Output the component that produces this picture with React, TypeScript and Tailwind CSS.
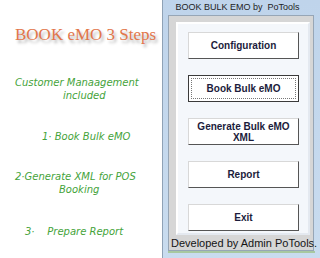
const green = 'text-[#44a33a] italic text-[10px] leading-[13px] whitespace-nowrap';
const greenFont = { fontFamily: '"DejaVu Sans", sans-serif' };

function WinButton({ label, focused = false }: { label: string; focused?: boolean }) {
  return (
    <div
      className={
        'h-[27px] w-[111px] bg-white flex items-center justify-center text-center ' +
        (focused
          ? 'border border-[#3a3a3a] p-[2px]'
          : 'border border-t-[#d8d8d8] border-l-[#d8d8d8] border-b-[#555] border-r-[#555]')
      }
    >
      <div
        className={
          'w-full h-full flex items-center justify-center ' +
          (focused ? 'border border-dotted border-[#777]' : '')
        }
      >
        <span className="text-[10px] leading-[11px] font-bold text-[#1c1c3c] font-['Liberation_Sans',sans-serif]">
          {label.split('\n').map((l, i) => (
            <span key={i} className="block">{l}</span>
          ))}
        </span>
      </div>
    </div>
  );
}

export default function App() {
  return (
    <div className="w-[320px] h-[258px] bg-white flex overflow-hidden">
      {/* left notes */}
      <div className="w-[162px] flex flex-col" style={greenFont}>
        <div
          className="mt-[26px] pl-[15px] text-[17px] leading-[18px] text-[#e2764b] whitespace-nowrap font-['Liberation_Serif',serif]"
          style={{ textShadow: '2px 3px 3px rgba(0,0,0,0.3)' }}
        >
          BOOK eMO 3 Steps
        </div>
        <div className={green + ' mt-[32px] pl-[15px]'}>Customer Manaagement</div>
        <div className={green + ' pl-[63px]'}>included</div>
        <div className={green + ' mt-[28px] pl-[42px]'}>1· Book Bulk eMO</div>
        <div className={green + ' mt-[27px] pl-[15px]'}>2·Generate XML for POS</div>
        <div className={green + ' pl-[59px]'}>Booking</div>
        <div className={green + ' mt-[29px] pl-[25px] whitespace-pre'}>3·    Prepare Report</div>
      </div>

      {/* app window */}
      <div className="w-[158px] h-[258px] border-l border-[#8fa2b6] bg-gradient-to-b from-[#bfd4eb] to-[#c9dcef] flex flex-col">
        <div className="h-[15px] flex items-center justify-center pr-[8px] text-[9px] text-[#1e1e1e] whitespace-nowrap font-['Liberation_Sans',sans-serif]">
          BOOK BULK EMO by&nbsp; PoTools
        </div>
        <div className="ml-[5px] mr-[6px] h-[236px] border border-[#97a6b6] bg-[#d6d6d6] flex flex-col">
          <div className="mt-[6px] ml-[7px] mr-[3px] h-[213px] bg-[#f4f7fb] border-2 border-t-[#ffffff] border-l-[#ffffff] border-r-[#e4e9f0] border-b-[#e4e9f0] flex flex-col items-center gap-[16px] pt-[8px] pl-[1px]">
            <WinButton label="Configuration" />
            <WinButton label="Book Bulk eMO" focused />
            <WinButton label={'Generate Bulk eMO\nXML'} />
            <WinButton label="Report" />
            <WinButton label="Exit" />
          </div>
          <div className="mt-[2px] pl-[2px] text-[11px] leading-[13px] text-[#141414] whitespace-nowrap font-['Liberation_Sans',sans-serif]">
            Developed by Admin PoTools.
          </div>
        </div>
        <div className="h-[2px] mx-[5px] bg-[#a8c8a0]" />
      </div>
    </div>
  );
}
